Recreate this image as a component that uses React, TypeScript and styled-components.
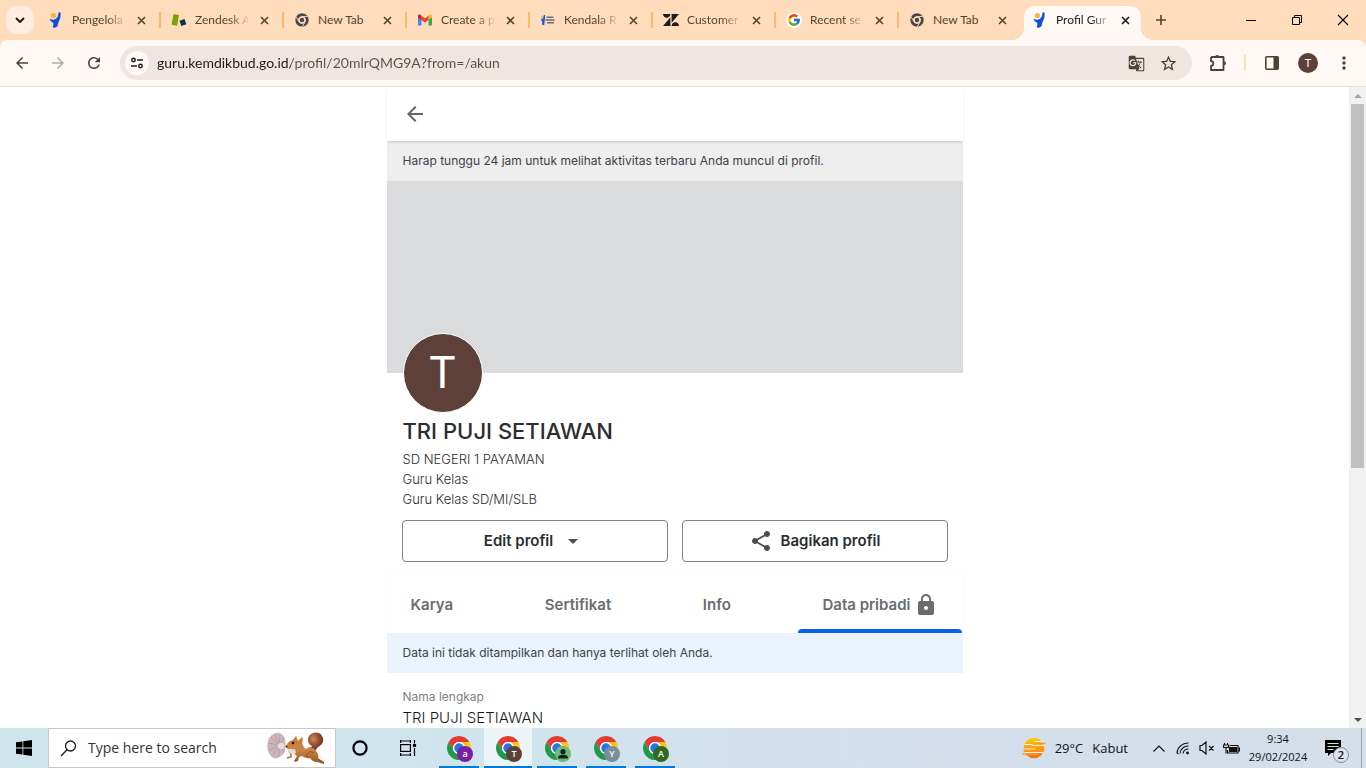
import React from "react";
import styled, { createGlobalStyle, css } from "styled-components";
import {
  MdArrowBack,
  MdArrowForward,
  MdArrowDropDown,
  MdGTranslate,
  MdLock,
  MdMoreVert,
  MdRefresh,
  MdShare,
  MdStarBorder,
} from "react-icons/md";
import { FcGoogle } from "react-icons/fc";
import { SiZendesk } from "react-icons/si";

const browserFont = `Lato, "Open Sans", sans-serif`;
const systemFont = `"Open Sans", "Noto Sans", sans-serif`;
const pageFont = `Inter, "Liberation Sans", sans-serif`;

const GlobalStyle = createGlobalStyle`
  *, *::before, *::after { box-sizing: border-box; }
  body { margin: 0; font-family: ${systemFont}; }
  h1, p, dl, dd { margin: 0; }
  button, input { font: inherit; color: inherit; margin: 0; padding: 0; border: 0; background: none; outline: none; }
  svg { display: block; flex: none; }
`;

const Screen = styled.div`
  display: flex;
  flex-direction: column;
  height: 100vh;
  overflow: hidden;
  background: #fff;
`;

/* ---------- Browser tab strip ---------- */

const TabStrip = styled.header`
  display: flex;
  flex: none;
  height: 40px;
  background: #ffdcbc;
  color: #54442f;
  font-family: ${browserFont};
`;

const TabSearch = styled.button`
  display: grid;
  place-items: center;
  flex: none;
  width: 28px;
  height: 28px;
  margin: 6px 4px 0 6px;
  border-radius: 10px;
  background: #ffeedf;
  color: #1f1b16;
`;

const Tab = styled.div<{ $active?: boolean; $last?: boolean }>`
  position: relative;
  display: flex;
  align-items: center;
  flex: 0 1 123px;
  min-width: 0;
  height: 40px;
  padding: 0 12px 0 10px;
  ${(p) =>
    !p.$active &&
    !p.$last &&
    css`
      &::after {
        content: "";
        position: absolute;
        right: 0;
        top: 12px;
        width: 2px;
        height: 16px;
        background: #ffb868;
      }
    `}
  ${(p) =>
    p.$active &&
    css`
      flex-basis: 117px;
      height: 34px;
      margin: 6px 0 0 2px;
      padding: 0 8px 6px 8px;
      border-radius: 10px 10px 0 0;
      background: #fff8f5;
      color: #1f1b16;
      &::before,
      &::after {
        content: "";
        position: absolute;
        bottom: 0;
        width: 12px;
        height: 12px;
      }
      &::before {
        right: 100%;
        background: radial-gradient(circle at 0 0, transparent 12px, #fff8f5 12px);
      }
      &::after {
        left: 100%;
        background: radial-gradient(circle at 100% 0, transparent 12px, #fff8f5 12px);
      }
    `}
`;

const Favicon = styled.span`
  display: grid;
  place-items: center;
  flex: none;
  width: 16px;
  height: 16px;
`;

const TabTitle = styled.button<{ $fade: boolean }>`
  flex: 1;
  min-width: 0;
  margin: 0 8px;
  overflow: hidden;
  white-space: nowrap;
  text-align: left;
  font-size: 12px;
  line-height: 16px;
  ${(p) =>
    p.$fade &&
    css`
      mask-image: linear-gradient(90deg, #000 65%, transparent 105%);
    `}
`;

const TabClose = styled.button`
  display: grid;
  place-items: center;
  flex: none;
  width: 16px;
  height: 16px;
`;

const NewTab = styled.button`
  display: grid;
  place-items: center;
  flex: none;
  width: 28px;
  height: 40px;
  margin-left: 6px;
`;

const WindowButtons = styled.div`
  display: flex;
  margin-left: auto;
  color: #000;
`;

const WindowButton = styled.button`
  display: grid;
  place-items: center;
  width: 46px;
  height: 40px;
`;

/* ---------- Browser toolbar ---------- */

const ToolbarShell = styled.div`
  flex: none;
  background: #ffdcbc;
  font-family: ${browserFont};
`;

const Toolbar = styled.div`
  display: flex;
  align-items: center;
  height: 47px;
  padding: 0 4px 0 8px;
  border-bottom: 1px solid #f0e0d0;
  border-radius: 8px 8px 0 0;
  background: #fff8f5;
  color: #4f4131;
`;

const ToolButton = styled.button<{ $muted?: boolean; $wide?: boolean }>`
  display: grid;
  place-items: center;
  flex: none;
  width: ${(p) => (p.$wide ? 36 : 28)}px;
  height: 28px;
  margin-right: ${(p) => (p.$wide ? 0 : 8)}px;
  color: ${(p) => (p.$muted ? "#b3aaa3" : "inherit")};
`;

const AddressBar = styled.div`
  display: flex;
  align-items: center;
  flex: 1;
  min-width: 0;
  height: 34px;
  margin: 0 8px 0 4px;
  padding: 0 8px 0 5px;
  border-radius: 17px;
  background: #efe6e1;
`;

const SiteInfo = styled.button`
  display: grid;
  place-items: center;
  flex: none;
  width: 24px;
  height: 24px;
  border-radius: 12px;
  background: #fff8f5;
  color: #1f1b16;
`;

const AddressInput = styled.input`
  flex: 1;
  min-width: 0;
  height: 24px;
  margin-left: 8px;
  font-size: 14px;
  line-height: 24px;
  background: linear-gradient(90deg, #1f1b16 134px, #5a504a 134px);
  background-clip: text;
  -webkit-background-clip: text;
  -webkit-text-fill-color: transparent;
`;

const AddressAction = styled.button`
  display: grid;
  place-items: center;
  flex: none;
  width: 32px;
  height: 32px;
`;

const ToolSeparator = styled.span`
  flex: none;
  width: 2px;
  height: 16px;
  margin: 0 8px;
  background: #ffdcbc;
`;

const ProfileDot = styled.span`
  display: grid;
  place-items: center;
  width: 20px;
  height: 20px;
  border-radius: 10px;
  background: #5d4037;
  color: #fff;
  font-size: 11px;
  line-height: 20px;
`;

/* ---------- Web page ---------- */

const Viewport = styled.div`
  display: flex;
  flex: 1;
  min-height: 0;
`;

const Page = styled.main`
  flex: 1;
  min-width: 0;
  overflow: hidden;
  font-family: ${pageFont};
  color: #2b2d30;
`;

const Column = styled.div`
  width: 100%;
  max-width: 576px;
  margin: 0 auto;
`;

const PageHeader = styled.div`
  position: relative;
  display: flex;
  align-items: center;
  height: 54px;
  padding: 0 16px;
  box-shadow: 0 2px 3px -1px rgba(0, 0, 0, 0.2);
  background: #fff;
  color: #646669;
`;

const BackButton = styled.button`
  display: grid;
  place-items: center;
  width: 24px;
  height: 24px;
`;

const Notice = styled.p<{ $info?: boolean }>`
  padding: 10px 16px;
  font-size: 12px;
  line-height: 20px;
  background: ${(p) => (p.$info ? "#eaf3fe" : "#eeeeee")};
  color: #404247;
`;

const Cover = styled.div`
  height: 192px;
  background: #dadbdd;
`;

const Profile = styled.section`
  padding: 0 15px;
`;

const Avatar = styled.div`
  position: relative;
  display: grid;
  place-items: center;
  width: 80px;
  height: 80px;
  margin: -40px 0 0 1px;
  border: 1px solid #fff;
  border-radius: 40px;
  background: #5d4037;
  color: #fff;
  font-family: Roboto, sans-serif;
  font-size: 44px;
  line-height: 78px;
`;

const Name = styled.h1`
  margin: 4px 1px 4px;
  font-size: 22px;
  line-height: 28px;
  font-weight: 500;
`;

const Detail = styled.p`
  margin: 0 1px;
  font-size: 13px;
  font-weight: 300;
  line-height: 20px;
  color: #2b2d30;
`;

const Actions = styled.div`
  display: grid;
  grid-template-columns: 1fr 1fr;
  gap: 14px;
  margin-top: 11px;
`;

const ActionButton = styled.button`
  display: flex;
  align-items: center;
  justify-content: center;
  gap: 8px;
  height: 42px;
  padding-bottom: 1px;
  border: 1px solid #808287;
  border-radius: 4px;
  font-size: 15px;
  font-weight: 600;
`;

const ProfileTabs = styled.nav`
  display: flex;
  justify-content: space-between;
  height: 60px;
  margin-top: 11px;
  box-shadow: 0 0 2px rgba(0, 0, 0, 0.05);
`;

const ProfileTab = styled.button<{ $active?: boolean }>`
  position: relative;
  display: flex;
  align-items: center;
  gap: 4px;
  padding: 3px 24px 0;
  font-size: 15px;
  font-weight: 600;
  color: #6a6c70;
  ${(p) =>
    p.$active &&
    css`
      &::after {
        content: "";
        position: absolute;
        left: 0;
        right: 0;
        bottom: 0;
        height: 4px;
        border-radius: 4px 4px 0 0;
        background: #0b5fef;
      }
    `}
`;

const Fields = styled.dl`
  padding: 14px 16px;
`;

const FieldLabel = styled.dt`
  font-size: 12px;
  line-height: 20px;
  color: #808287;
`;

const FieldValue = styled.dd`
  font-size: 15px;
  font-weight: 300;
  line-height: 22px;
  color: #16181b;
`;

const ScrollTrack = styled.div`
  display: flex;
  flex-direction: column;
  flex: none;
  width: 17px;
  background: #f1f1f1;
`;

const ScrollArrow = styled.button<{ $muted?: boolean }>`
  display: grid;
  place-items: center;
  flex: none;
  height: 17px;
  color: ${(p) => (p.$muted ? "#a3a3a3" : "#505050")};
`;

const ScrollRail = styled.div`
  flex: 1;
  padding: 0 2px;
`;

const ScrollThumb = styled.div`
  height: 60%;
  background: #c1c1c1;
`;

/* ---------- Taskbar ---------- */

const Taskbar = styled.footer`
  display: flex;
  flex: none;
  height: 40px;
  background: linear-gradient(90deg, #cfe6ee 0%, #d0e4ee 40%, #d2e0ed 55%, #d5deea 100%);
  color: #111;
`;

const TaskButton = styled.button`
  display: grid;
  place-items: center;
  flex: none;
  width: 48px;
  height: 40px;
`;

const TaskSearch = styled.label`
  display: flex;
  align-items: center;
  flex: none;
  width: 288px;
  padding: 0 10px 0 11px;
  border: 1px solid #c8c8c8;
  background: #fff;
`;

const TaskSearchInput = styled.input`
  flex: 1;
  min-width: 0;
  margin-left: 11px;
  font-size: 14px;
  line-height: 20px;
  &::placeholder {
    color: #333;
    opacity: 1;
  }
`;

const RunningApps = styled.div`
  display: flex;
  gap: 1px;
  margin-left: 3px;
`;

const RunningApp = styled.button<{ $active?: boolean }>`
  display: grid;
  place-items: center;
  position: relative;
  width: 48px;
  height: 40px;
  background: ${(p) => (p.$active ? "#ebf4f7" : "transparent")};
  &::after {
    content: "";
    position: absolute;
    bottom: 0;
    left: ${(p) => (p.$active ? 0 : 4)}px;
    right: ${(p) => (p.$active ? 0 : 4)}px;
    height: 2px;
    background: #0078d7;
  }
`;

const AppBadge = styled.span<{ $color: string }>`
  position: absolute;
  left: 22px;
  top: 18px;
  display: grid;
  place-items: center;
  width: 16px;
  height: 16px;
  border-radius: 8px;
  overflow: hidden;
  background: ${(p) => p.$color};
  color: #fff;
  font-size: 9px;
  font-weight: 600;
  line-height: 16px;
`;

const Tray = styled.div`
  display: flex;
  align-items: center;
  margin-left: auto;
  padding-right: 4px;
`;

const Weather = styled.button`
  display: flex;
  align-items: center;
  gap: 9px;
  margin-right: 19px;
  font-size: 13px;
  line-height: 20px;
`;

const TrayButton = styled.button`
  display: grid;
  place-items: center;
  width: 24px;
  height: 40px;
`;

const Clock = styled.button`
  width: 72px;
  padding-right: 2px;
  font-size: 11px;
  line-height: 18px;
  text-align: center;
`;

const Notifications = styled.button`
  position: relative;
  display: grid;
  place-items: center;
  width: 36px;
  height: 40px;
  margin-right: 10px;
`;

const NotificationCount = styled.span`
  position: absolute;
  left: 18px;
  top: 19px;
  width: 16px;
  height: 16px;
  border: 1px solid #8a8d91;
  border-radius: 8px;
  background: #dde3ea;
  font-size: 11px;
  font-weight: 600;
  line-height: 14px;
`;

const DesktopEdge = styled.span`
  width: 1px;
  height: 40px;
  background: #9aa5b0;
`;

/* ---------- Drawings ---------- */

const KemdikbudIcon = () => (
  <svg width="16" height="16" viewBox="0 0 16 16">
    <path d="M1.500 6.500c2 1.600 5.500 1.800 7.500-.7C10.200 4.300 10.400 2 10.500.6l1.900-.3c.5 3.200.1 6.200-1.500 8.900-.8 1.400-.9 3.300-1.300 4.700-1.500 1.700-3.900 2.400-5 1.200.8-1.400.9-3 .6-4.400C3.400 10 1.900 8.700 1.500 6.500z" fill="#0d4fe0" />
    <circle cx="5.500" cy="3.500" r="2.600" fill="#f9b340" />
  </svg>
);

const ZendeskSellIcon = () => (
  <svg width="16" height="16" viewBox="0 0 16 16">
    <path d="M2.500 2l5.500 1-2 11L.500 12.500z" fill="#78a300" />
    <path d="M8.500 8.800l5-1.800 1.800 5.200-5 1.800z" fill="#03363d" />
  </svg>
);

const ChromeIcon = ({ size, mono }: { size: number; mono?: boolean }) => {
  const gap = mono ? { stroke: "#ffdcbc", strokeWidth: 1.2 } : {};
  return (
    <svg width={size} height={size} viewBox="0 0 24 24">
      <path d="M1.610 6A12 12 0 0 1 22.390 6L12 6A6 6 0 0 0 6.800 15Z" fill={mono ? "#45474a" : "#e33b2e"} {...gap} />
      <path d="M22.390 6A12 12 0 0 1 12 24L17.200 15A6 6 0 0 0 12 6Z" fill={mono ? "#45474a" : "#fcc31e"} {...gap} />
      <path d="M12 24A12 12 0 0 1 1.610 6L6.800 15A6 6 0 0 0 17.200 15Z" fill={mono ? "#45474a" : "#209a48"} {...gap} />
      <circle cx="12" cy="12" r="6" fill={mono ? "#ffdcbc" : "#fff"} />
      <circle cx="12" cy="12" r={mono ? 3.8 : 4.7} fill={mono ? "#45474a" : "#2a73e8"} />
    </svg>
  );
};

const GmailIcon = () => (
  <svg width="16" height="16" viewBox="0 0 16 16">
    <path d="M1 4v8.500c0 .6.400 1 1 1h2.500V6.800z" fill="#4285f4" />
    <path d="M15 4v8.500c0 .6-.4 1-1 1h-2.500V6.800z" fill="#34a853" />
    <path d="M11.500 3.700V8L15 5.400V4c0-1.500-1.500-2-2.500-1.200z" fill="#fbbc04" />
    <path d="M4.500 8V3.700L8 6.300l3.500-2.600V8L8 10.600z" fill="#ea4335" />
    <path d="M1 4v1.400L4.500 8V3.700l-1-.9C2.500 2 1 2.500 1 4z" fill="#c5221f" />
  </svg>
);

const HelpdeskIcon = () => (
  <svg width="16" height="16" viewBox="0 0 16 16">
    <path d="M1 6.500c1.200 1 2.300.5 2.800-3.500h1.200C5.200 7 4.700 9 4.300 13H2.300C2.700 9.500 1 8.500 1 6.500z" fill="#0d5fe0" />
    <circle cx="2.200" cy="5" r="1" fill="#f9b340" />
    <path d="M6.500 5.200h7M5.500 8h9M7 10.800h7" stroke="#6a6a74" strokeWidth="1.500" />
  </svg>
);

const GoogleTabIcon = () => (
  <svg width="16" height="16" viewBox="0 0 16 16">
    <circle cx="8" cy="8" r="8" fill="#fff" />
    <FcGoogle x="1" y="1" size={14} />
  </svg>
);

const CrossIcon = ({ size, weight }: { size: number; weight: number }) => (
  <svg width={size} height={size} viewBox={`0 0 ${size} ${size}`} stroke="currentColor" strokeWidth={weight}>
    <path d={`M1 1L${size - 1} ${size - 1}M${size - 1} 1L1 ${size - 1}`} />
  </svg>
);

const TuneIcon = () => (
  <svg width="14" height="14" viewBox="0 0 14 14" fill="none" stroke="currentColor" strokeWidth="1.500">
    <circle cx="3.500" cy="4" r="1.700" />
    <path d="M7 4h6M1 10h6" />
    <circle cx="10.500" cy="10" r="1.700" />
  </svg>
);

const ExtensionIcon = () => (
  <svg width="20" height="20" viewBox="0 0 20 20">
    <path d="M3 4h12.500v4.500M15.500 11v6H3v-4.200a2.300 2.300 0 0 0 0-4.600V4M15.500 8.500v3" fill="none" stroke="currentColor" strokeWidth="1.800" strokeLinejoin="round" />
    <path d="M7.200 4a2 2 0 0 1 4 0zM16 8.200a2 2 0 0 1 0 4z" fill="currentColor" />
  </svg>
);

const SidePanelIcon = () => (
  <svg width="16" height="16" viewBox="0 0 16 16">
    <rect x="1.800" y="1.800" width="12.400" height="12.400" rx="1" fill="none" stroke="currentColor" strokeWidth="1.600" />
    <path d="M9.500 2H14v12H9.500z" fill="currentColor" />
  </svg>
);

const WindowsIcon = () => (
  <svg width="16" height="16" viewBox="0 0 16 16" fill="#000">
    <path d="M0 2.300l6.500-.9v6.100H0zM7.300 1.300L16 0v7.500H7.300zM0 8.400h6.500v6.200L0 13.700zM7.300 8.400H16V16l-8.700-1.200z" />
  </svg>
);

const SearchIcon = () => (
  <svg width="17" height="17" viewBox="0 0 17 17" fill="none" stroke="#1b1b1b" strokeWidth="1.300">
    <circle cx="10.500" cy="6" r="5" />
    <path d="M7 9.800L1 16" />
  </svg>
);

const SquirrelArt = () => (
  <svg width="58" height="32" viewBox="0 0 58 32">
    <defs>
      <linearGradient id="fur" x1="0" y1="0" x2="0" y2="1">
        <stop offset="0" stopColor="#c27a35" />
        <stop offset=".5" stopColor="#c98646" />
        <stop offset="1" stopColor="#8f5420" />
      </linearGradient>
      <radialGradient id="tail" cx=".4" cy=".35" r=".65">
        <stop offset="0" stopColor="#c98a6a" />
        <stop offset=".5" stopColor="#9a5230" />
        <stop offset="1" stopColor="#6b2f16" />
      </radialGradient>
    </defs>
    <path d="M9 1c4-1 8 2 9 6 1 5 1 10-1 14-2 3-4 3-6 5-3 1-6 0-8-3C0 19 0 14 1 9 2 5 5 2 9 1z" fill="#cdb6b9" />
    <g stroke="#a98f96" strokeWidth=".6" fill="none">
      <path d="M12 13L4 5M12 13L8 2M12 13l1-11M12 13l5-7M12 13L1 11M12 13l-10 6M12 13L6 24M12 13l0 12M12 13l5 7" />
    </g>
    <ellipse cx="14" cy="14" rx="3.500" ry="3" fill="#e9dada" />
    <path d="M40 16c3 0 5-1 5-2-4-2-5-6-3-10 3-4 10-5 13 0 3 5 0 9-4 11l-3 4z" fill="url(#tail)" />
    <path d="M29 4l2 5 4-4c1 2 1 4 0 6 1 3 2 5 4 6 3-2 7-2 9 1 3 3 4 5 3 8l6 4v2l-7-2c-3 0-6-2-7-4-3 1-6-1-8-2l-3 1-1 4-3 1-1-1 3-5c-3-2-4-4-5-7-3 1-5 0-6-2 1-4 3-6 7-7z" fill="url(#fur)" />
    <path d="M22 19l2 3 0 3-4 1" fill="none" stroke="#b06e2e" strokeWidth="1.600" />
    <path d="M20 17c3 1 6 1 8 0l1 4c-3 1-6 1-7-1z" fill="#e7dce4" />
    <path d="M40 25c-1-4 3-7 7-4" fill="none" stroke="#8a4c1c" strokeWidth=".8" />
    <circle cx="26" cy="11" r="1.300" fill="#25130a" />
    <circle cx="19.500" cy="14.500" r="1" fill="#4a2514" />
  </svg>
);

const TaskViewIcon = () => (
  <svg width="18" height="16" viewBox="0 0 18 16" fill="none" stroke="#000" strokeWidth="1.200">
    <path d="M1 1h11M1 15h11M1.600 0v3M11.400 0v3M1.600 16v-3M11.400 16v-3" />
    <rect x="1.600" y="4.600" width="9.800" height="6.800" />
    <path d="M15.500 0v3.500M15.500 8v8" />
    <path d="M14.500 4.500h2v2h-2z" fill="#000" />
  </svg>
);

const PersonGlyph = () => (
  <svg width="16" height="16" viewBox="0 0 16 16" fill="#10251a">
    <circle cx="8" cy="5.700" r="2.600" />
    <path d="M3 12.500c0-3 2-3.700 5-3.700s5 .7 5 3.700z" />
  </svg>
);

const FogIcon = () => (
  <svg width="24" height="22" viewBox="0 0 24 22">
    <defs>
      <linearGradient id="sun" x1="0" y1="0" x2="0" y2="1">
        <stop offset="0" stopColor="#ffcc0a" />
        <stop offset="1" stopColor="#ee6f1b" />
      </linearGradient>
    </defs>
    <circle cx="12" cy="11" r="10.300" fill="url(#sun)" />
    <g stroke="#fff0cf" strokeWidth="1" strokeLinecap="round">
      <path d="M3 7.500h7M13 4.500h8M10 8.500h12M2 12h11M3 15.500h18" />
    </g>
    <g stroke="#f59a2a" strokeWidth="1.300" strokeLinecap="round">
      <path d="M14 6.300h9M2 13.500h20M1 17h14" />
    </g>
  </svg>
);

const WifiIcon = () => (
  <svg width="14" height="14" viewBox="0 0 14 14" fill="none" stroke="#111" strokeWidth="1.100">
    <path d="M1 12A11 11 0 0 1 12.500 2M4 12.500A8 8 0 0 1 12.500 5M7 12.500A5.500 5.500 0 0 1 12.500 8" />
    <path d="M1 12l1.500 1" />
    <circle cx="11.500" cy="12" r="1.400" fill="#111" stroke="none" />
  </svg>
);

const MutedIcon = () => (
  <svg width="16" height="14" viewBox="0 0 16 14" fill="none" stroke="#111" strokeWidth="1.200">
    <path d="M1 4.500h2L7 1v12L3 9.500H1zM10 5l4.500 4.500M14.500 5L10 9.500" />
  </svg>
);

const BatteryIcon = () => (
  <svg width="17" height="13" viewBox="0 0 17 13" fill="none" stroke="#111" strokeWidth="1.100">
    <path d="M6.500 3.500h8.500v7.500H4.500V8M15.500 6h1v3h-1M1.500 1v2M4.500 1v2M.5 3h5v2.500h-5zM3 6v5.500" />
    <path d="M6.500 5.500h7v4h-7z" fill="#111" />
  </svg>
);

const MessageIcon = () => (
  <svg width="16" height="16" viewBox="0 0 16 16">
    <path d="M0 0h16v13H6l-3 3v-3H0z" fill="#000" />
    <path d="M2.500 3.500h11M2.500 6.500h11M2.500 9.500h6" stroke="#dbe1ea" strokeWidth="1.200" />
  </svg>
);

/* ---------- Content ---------- */

const tabs = [
  { title: "Pengelola", icon: <KemdikbudIcon /> },
  { title: "Zendesk A", icon: <ZendeskSellIcon /> },
  { title: "New Tab", icon: <ChromeIcon size={14} mono /> },
  { title: "Create a p", icon: <GmailIcon /> },
  { title: "Kendala R", icon: <HelpdeskIcon /> },
  { title: "Customer", icon: <SiZendesk size={16} color="#1f1b16" /> },
  { title: "Recent se", icon: <GoogleTabIcon /> },
  { title: "New Tab", icon: <ChromeIcon size={14} mono /> },
  { title: "Profil Gur", icon: <KemdikbudIcon /> },
];

const runningApps = [
  { label: "a", color: "#7b1fa2" },
  { label: "T", color: "#5d4037" },
  { label: "", color: "#72b87a" },
  { label: "Y", color: "#78909c" },
  { label: "A", color: "#33691e" },
];

const Browser = () => (
  <>
    <TabStrip>
      <TabSearch aria-label="Search tabs">
        <svg width="10" height="6" viewBox="0 0 10 6" fill="none" stroke="currentColor" strokeWidth="2">
          <path d="M1 1l4 4 4-4" />
        </svg>
      </TabSearch>
      {tabs.map((tab, i) => (
        <Tab key={i} $active={i === tabs.length - 1} $last={i === tabs.length - 2}>
          <Favicon>{tab.icon}</Favicon>
          <TabTitle $fade={tab.title !== "New Tab"}>{tab.title}</TabTitle>
          <TabClose aria-label="Close tab">
            <CrossIcon size={9} weight={1.6} />
          </TabClose>
        </Tab>
      ))}
      <NewTab aria-label="New tab">
        <svg width="10" height="10" viewBox="0 0 10 10" stroke="currentColor" strokeWidth="1.600">
          <path d="M5 0v10M0 5h10" />
        </svg>
      </NewTab>
      <WindowButtons>
        <WindowButton aria-label="Minimize">
          <svg width="10" height="10" viewBox="0 0 10 10" stroke="currentColor">
            <path d="M0 5.500h10" />
          </svg>
        </WindowButton>
        <WindowButton aria-label="Restore">
          <svg width="10" height="10" viewBox="0 0 10 10" stroke="currentColor" fill="none">
            <path d="M.5 2.500h7v7h-7zM2.500 2.500v-2h7v7h-2" />
          </svg>
        </WindowButton>
        <WindowButton aria-label="Close">
          <CrossIcon size={12} weight={1.1} />
        </WindowButton>
      </WindowButtons>
    </TabStrip>
    <ToolbarShell>
      <Toolbar>
        <ToolButton aria-label="Back"><MdArrowBack size={18} /></ToolButton>
        <ToolButton aria-label="Forward" $muted><MdArrowForward size={18} /></ToolButton>
        <ToolButton aria-label="Reload"><MdRefresh size={18} /></ToolButton>
        <AddressBar>
          <SiteInfo aria-label="Site information"><TuneIcon /></SiteInfo>
          <AddressInput aria-label="Address" defaultValue="guru.kemdikbud.go.id/profil/20mlrQMG9A?from=/akun" />
          <AddressAction aria-label="Translate"><MdGTranslate size={17} /></AddressAction>
          <AddressAction aria-label="Bookmark"><MdStarBorder size={19} /></AddressAction>
        </AddressBar>
        <ToolButton aria-label="Extensions" $wide><ExtensionIcon /></ToolButton>
        <ToolSeparator />
        <ToolButton aria-label="Side panel" $wide><SidePanelIcon /></ToolButton>
        <ToolButton aria-label="Profile" $wide><ProfileDot>T</ProfileDot></ToolButton>
        <ToolButton aria-label="Menu" $wide><MdMoreVert size={20} /></ToolButton>
      </Toolbar>
    </ToolbarShell>
  </>
);

const ProfilePage = () => (
  <Viewport>
    <Page>
      <Column>
        <PageHeader>
          <BackButton aria-label="Kembali"><MdArrowBack size={24} /></BackButton>
        </PageHeader>
        <Notice>Harap tunggu 24 jam untuk melihat aktivitas terbaru Anda muncul di profil.</Notice>
        <Cover />
        <Profile>
          <Avatar>T</Avatar>
          <Name>TRI PUJI SETIAWAN</Name>
          <Detail>SD NEGERI 1 PAYAMAN</Detail>
          <Detail>Guru Kelas</Detail>
          <Detail>Guru Kelas SD/MI/SLB</Detail>
          <Actions>
            <ActionButton>Edit profil<MdArrowDropDown size={24} color="#4a4c50" /></ActionButton>
            <ActionButton><MdShare size={24} color="#4a4c50" />Bagikan profil</ActionButton>
          </Actions>
        </Profile>
        <ProfileTabs>
          <ProfileTab>Karya</ProfileTab>
          <ProfileTab>Sertifikat</ProfileTab>
          <ProfileTab>Info</ProfileTab>
          <ProfileTab $active>Data pribadi<MdLock size={24} /></ProfileTab>
        </ProfileTabs>
        <Notice $info>Data ini tidak ditampilkan dan hanya terlihat oleh Anda.</Notice>
        <Fields>
          <FieldLabel>Nama lengkap</FieldLabel>
          <FieldValue>TRI PUJI SETIAWAN</FieldValue>
        </Fields>
      </Column>
    </Page>
    <ScrollTrack>
      <ScrollArrow aria-label="Scroll up" $muted>
        <svg width="8" height="4" viewBox="0 0 8 4" fill="currentColor"><path d="M0 4l4-4 4 4z" /></svg>
      </ScrollArrow>
      <ScrollRail><ScrollThumb /></ScrollRail>
      <ScrollArrow aria-label="Scroll down">
        <svg width="8" height="4" viewBox="0 0 8 4" fill="currentColor"><path d="M0 0l4 4 4-4z" /></svg>
      </ScrollArrow>
    </ScrollTrack>
  </Viewport>
);

const SystemTaskbar = () => (
  <Taskbar>
    <TaskButton aria-label="Start"><WindowsIcon /></TaskButton>
    <TaskSearch>
      <SearchIcon />
      <TaskSearchInput aria-label="Search" placeholder="Type here to search" />
      <SquirrelArt />
    </TaskSearch>
    <TaskButton aria-label="Cortana">
      <svg width="16" height="16" viewBox="0 0 16 16" fill="none" stroke="#000" strokeWidth="2.200">
        <circle cx="8" cy="8" r="6.600" />
      </svg>
    </TaskButton>
    <TaskButton aria-label="Task view"><TaskViewIcon /></TaskButton>
    <RunningApps>
      {runningApps.map((app, i) => (
        <RunningApp key={i} $active={i === 1} aria-label="Google Chrome">
          <ChromeIcon size={24} />
          <AppBadge $color={app.color}>{app.label || <PersonGlyph />}</AppBadge>
        </RunningApp>
      ))}
    </RunningApps>
    <Tray>
      <Weather><FogIcon /><span>29°C</span><span>Kabut</span></Weather>
      <TrayButton aria-label="Show hidden icons">
        <svg width="12" height="7" viewBox="0 0 12 7" fill="none" stroke="#111" strokeWidth="1.200"><path d="M.5 6.500L6 1l5.500 5.500" /></svg>
      </TrayButton>
      <TrayButton aria-label="Network"><WifiIcon /></TrayButton>
      <TrayButton aria-label="Volume"><MutedIcon /></TrayButton>
      <TrayButton aria-label="Battery"><BatteryIcon /></TrayButton>
      <Clock>9:34<br />29/02/2024</Clock>
      <Notifications aria-label="Notifications">
        <MessageIcon />
        <NotificationCount>2</NotificationCount>
      </Notifications>
      <DesktopEdge />
    </Tray>
  </Taskbar>
);

export default function App() {
  return (
    <Screen>
      <GlobalStyle />
      <Browser />
      <ProfilePage />
      <SystemTaskbar />
    </Screen>
  );
}
